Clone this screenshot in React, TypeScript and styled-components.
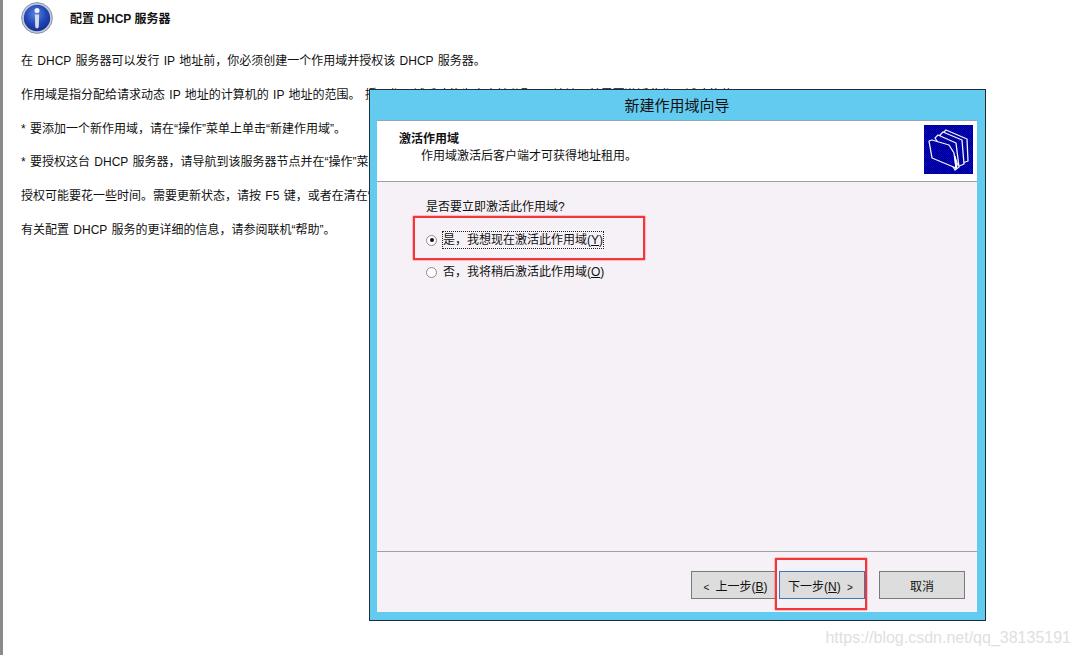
import styled, { createGlobalStyle } from "styled-components";

const Global = createGlobalStyle`
  html, body { margin: 0; padding: 0; background: #fff; }
  body { font-family: "Liberation Sans", "Noto Sans CJK SC", sans-serif; color: #111; overflow: hidden; }
`;

const LINES = [
  "在 DHCP 服务器可以发行 IP 地址前，你必须创建一个作用域并授权该 DHCP 服务器。",
  "作用域是指分配给请求动态 IP 地址的计算机的 IP 地址的范围。 授予作用域后才能为客户端分配 IP 地址，并需要激活此作用域才能使用。",
  "* 要添加一个新作用域，请在“操作”菜单上单击“新建作用域”。",
  "* 要授权这台 DHCP 服务器，请导航到该服务器节点并在“操作”菜单上单击“授权”。",
  "授权可能要花一些时间。需要更新状态，请按 F5 键，或者在清在“操作”菜单上单击“刷新”。",
  "有关配置 DHCP 服务的更详细的信息，请参阅联机“帮助”。",
];

export default function App() {
  return (
    <>
      <Global />
      <Page>
        <Head>
          <InfoIcon />
          <HeadTitle>配置 DHCP 服务器</HeadTitle>
        </Head>
        <Body>
          {LINES.map((line) => (
            <Line key={line}>{line}</Line>
          ))}
        </Body>

        <Dialog>
          <TitleBar>新建作用域向导</TitleBar>
          <Client>
            <Banner>
              <BannerText>
                <BannerTitle>激活作用域</BannerTitle>
                <BannerSub>作用域激活后客户端才可获得地址租用。</BannerSub>
              </BannerText>
              <FolderIcon />
            </Banner>
            <Content>
              <Question>是否要立即激活此作用域?</Question>
              <RadioRow $first>
                <Radio $checked />
                <FocusLabel>
                  是，我想现在激活此作用域(<u>Y</u>)
                </FocusLabel>
              </RadioRow>
              <RadioRow>
                <Radio />
                <RadioLabel>
                  否，我将稍后激活此作用域(<u>O</u>)
                </RadioLabel>
              </RadioRow>
              <Mark $w={228} $h={40} $x={36} $y={34} />
            </Content>
            <Footer>
              <Btn>
                <span>&lt;</span> 上一步(<u>B</u>)
              </Btn>
              <NextBtn>
                下一步(<u>N</u>) <span>&gt;</span>
              </NextBtn>
              <CancelBtn>取消</CancelBtn>
              <Mark $w={88} $h={48} $x={398} $y={6} />
            </Footer>
          </Client>
        </Dialog>

        <Watermark>https://blog.csdn.net/qq_38135191</Watermark>
      </Page>
    </>
  );
}

function InfoIcon() {
  return (
    <InfoSvg viewBox="0 0 32 32">
      <defs>
        <radialGradient id="ball" cx="45%" cy="35%" r="70%">
          <stop offset="0" stopColor="#5c86e0" />
          <stop offset="0.55" stopColor="#2349b8" />
          <stop offset="1" stopColor="#122c8c" />
        </radialGradient>
      </defs>
      <circle cx="16" cy="16" r="15.4" fill="#c3cad6" stroke="#76829c" strokeWidth="0.8" />
      <circle cx="16" cy="16" r="13.2" fill="url(#ball)" />
      <circle cx="16" cy="8.6" r="2.5" fill="#eef1f6" />
      <path d="M13.9 12.6h4.2l-.3 12a1.8 1.8 0 0 1-3.6 0z" fill="#d6dbe6" />
    </InfoSvg>
  );
}

function FolderIcon() {
  return (
    <FolderSvg viewBox="0 0 49 49">
      <defs>
        <pattern id="dots" width="2" height="2" patternUnits="userSpaceOnUse">
          <rect width="2" height="2" fill="#000050" />
          <rect width="1" height="1" fill="#0000ff" />
          <rect x="1" y="1" width="1" height="1" fill="#0000ff" />
        </pattern>
      </defs>
      <rect width="49" height="49" fill="url(#dots)" />
      <g fill="url(#dots)" stroke="#f4f4f4" strokeWidth="1.3" strokeLinejoin="round">
        <path d="M20 7l2-2 21 9 1 22-8 3z" />
        <path d="M16 10l3-3 19 8 2 24-7 3z" />
        <path d="M11 13l3-3 18 8 3 24-4 3z" />
        <path d="M5 16l3-1 17 5 5 8 2 15-24-10z" />
      </g>
      <path d="M30.5 30l1.5 14 1.5-5z" fill="#fff" stroke="#fff" />
    </FolderSvg>
  );
}

const Page = styled.div`
  position: relative;
  width: 1077px;
  height: 655px;
  box-sizing: border-box;
  border-left: 3px solid #8a8a8a;
  overflow: hidden;
  font-size: 12px;
  background: #fff;
`;

const Head = styled.header`
  display: flex;
  align-items: center;
  gap: 17px;
  padding: 2px 0 0 18px;
  height: 32px;
`;

const InfoSvg = styled.svg`
  width: 32px;
  height: 32px;
  flex: none;
`;

const HeadTitle = styled.h1`
  margin: 0 0 2px;
  font-size: 12px;
  font-weight: 700;
`;

const Body = styled.div`
  padding: 18px 0 0 18px;
  display: flex;
  flex-direction: column;
  gap: 15.8px;
`;

const Line = styled.p`
  margin: 0;
  height: 18px;
  line-height: 18px;
  white-space: nowrap;
  word-spacing: 1px;
`;

const Dialog = styled.section`
  position: absolute;
  left: 366px;
  top: 89px;
  width: 617px;
  height: 532px;
  box-sizing: border-box;
  border: 1px solid #1f2f3a;
  background: #63cbf0;
  padding: 0 8px 8px 7px;
  display: flex;
  flex-direction: column;
`;

const TitleBar = styled.div`
  height: 30px;
  line-height: 31px;
  text-align: center;
  font-size: 15px;
  flex: none;
`;

const Client = styled.div`
  flex: 1;
  display: flex;
  flex-direction: column;
  background: #f6f1f6;
  border-top: 1px solid #8aa9bd;
`;

const Banner = styled.div`
  height: 61px;
  box-sizing: border-box;
  flex: none;
  background: #fff;
  border-bottom: 1px solid #a0a0a0;
  display: flex;
  justify-content: space-between;
  align-items: flex-start;
  padding: 4px 4px 0 22px;
`;

const BannerText = styled.div`
  padding-top: 7px;
`;

const BannerTitle = styled.div`
  font-weight: 700;
  font-size: 12px;
  line-height: 15px;
`;

const BannerSub = styled.div`
  padding-left: 22px;
  padding-top: 1px;
  line-height: 17px;
  font-size: 12px;
`;

const FolderSvg = styled.svg`
  width: 49px;
  height: 49px;
  flex: none;
`;

const Content = styled.div`
  position: relative;
  flex: 1;
  padding: 16px 0 0 49px;
  border-bottom: 1px solid #a0a0a0;
`;

const Question = styled.div`
  line-height: 18px;
`;

const RadioRow = styled.div<{ $first?: boolean }>`
  display: flex;
  align-items: center;
  gap: 6px;
  height: 18px;
  margin-top: ${({ $first }) => ($first ? "15px" : "14px")};
`;

const Radio = styled.span<{ $checked?: boolean }>`
  width: 9px;
  height: 9px;
  flex: none;
  border-radius: 50%;
  background: #fff;
  border: 1px solid #8c8c8c;
  position: relative;
  &::after {
    content: "";
    display: ${({ $checked }) => ($checked ? "block" : "none")};
    position: absolute;
    left: 2.5px;
    top: 2.5px;
    width: 4px;
    height: 4px;
    border-radius: 50%;
    background: #111;
  }
`;

const RadioLabel = styled.span`
  line-height: 16px;
`;

const FocusLabel = styled(RadioLabel)`
  outline: 1px dotted #222;
`;

const Footer = styled.div`
  position: relative;
  flex: none;
  height: 60px;
  box-sizing: border-box;
  padding: 19px 12px 0 0;
  display: flex;
  justify-content: flex-end;
`;

const Btn = styled.button`
  width: 86px;
  height: 28px;
  padding: 0;
  margin: 0;
  box-sizing: border-box;
  background: #dddddd;
  border: 1px solid #7a7a7a;
  font: inherit;
  color: #111;
  span {
    font-size: 10px;
    padding: 0 3px;
  }
`;

const NextBtn = styled(Btn)`
  margin-left: 2px;
  border-color: #3a78b5;
`;

const CancelBtn = styled(Btn)`
  margin-left: 14px;
`;

const Mark = styled.div<{ $w: number; $h: number; $x: number; $y: number }>`
  position: absolute;
  left: ${({ $x }) => $x}px;
  top: ${({ $y }) => $y}px;
  width: ${({ $w }) => $w}px;
  height: ${({ $h }) => $h}px;
  border: 2px solid #f2373b;
  box-shadow: 0 0 1.5px #f2373b;
  pointer-events: none;
`;

const Watermark = styled.div`
  position: absolute;
  right: 6px;
  bottom: 8px;
  font-size: 16px;
  color: #e0e0e0;
`;
